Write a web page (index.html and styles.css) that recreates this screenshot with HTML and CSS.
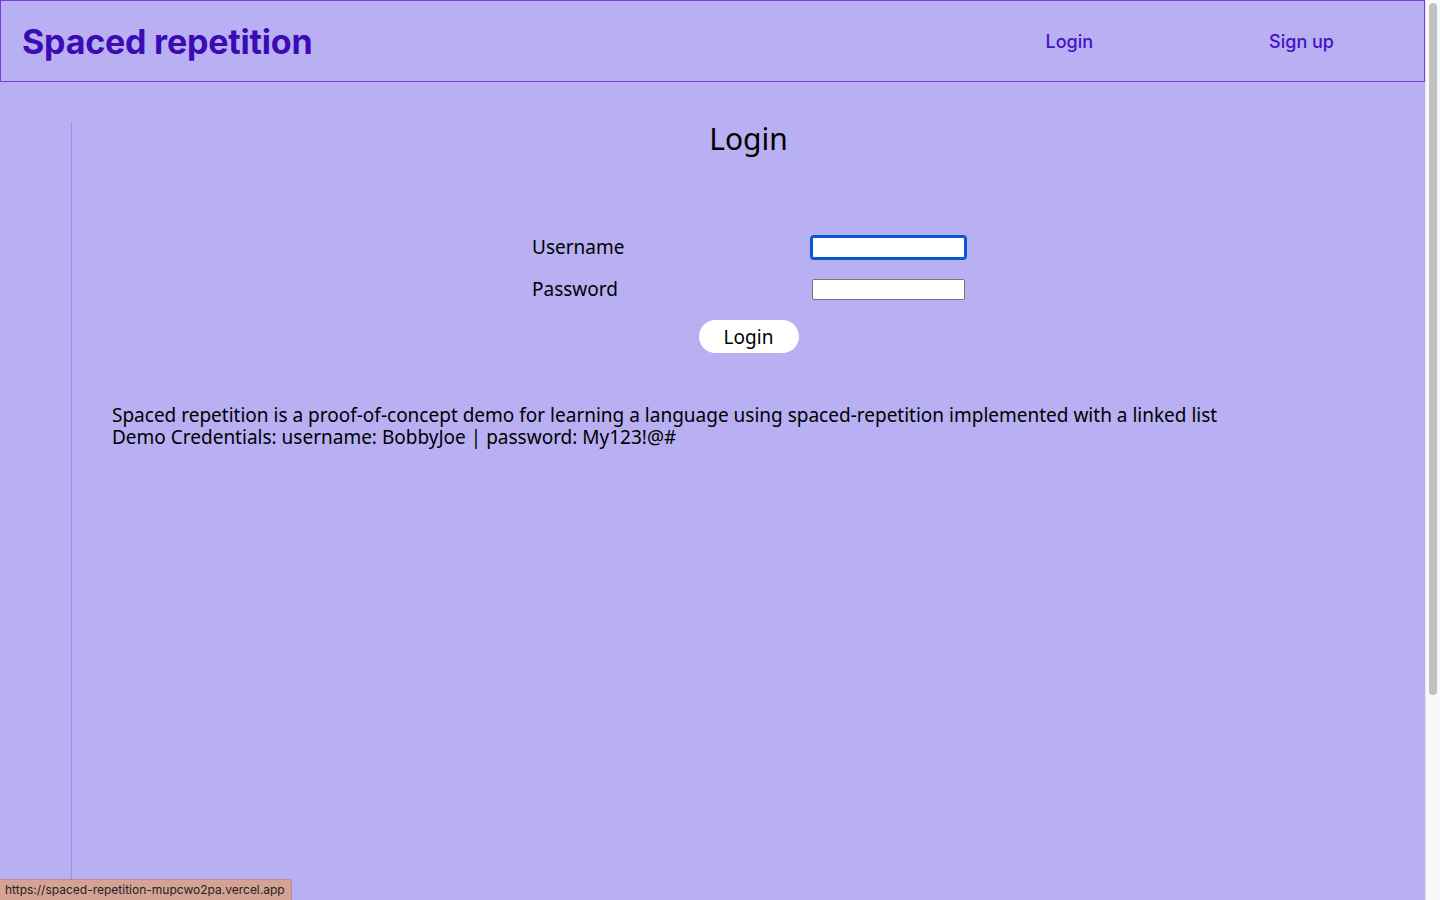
FILE: index.html
```html
<!DOCTYPE html>
<html lang="en">
<head>
<meta charset="utf-8">
<title>Spaced repetition</title>
<link rel="stylesheet" href="styles.css">
</head>
<body>
<header class="site-header">
  <h1 class="brand">Spaced repetition</h1>
  <nav class="nav">
    <a class="nav-link nav-login" href="#">Login</a>
    <a class="nav-link nav-signup" href="#">Sign up</a>
  </nav>
</header>
<main class="main">
  <h2 class="page-title">Login</h2>
  <form class="login-form">
    <label class="label" for="username">Username</label>
    <input class="input input-focus" id="username" type="text">
    <label class="label" for="password">Password</label>
    <input class="input" id="password" type="password">
    <div class="actions"><button class="btn" type="button">Login</button></div>
  </form>
  <div class="about">
    <p>Spaced repetition is a proof-of-concept demo for learning a language using spaced-repetition implemented with a linked list</p>
    <p>Demo Credentials: username: BobbyJoe | password: My123!@#</p>
  </div>
</main>
<div class="scrollbar"><div class="scrollbar-thumb"></div></div>
<div class="status-url">https://spaced-repetition-mupcwo2pa.vercel.app</div>
</body>
</html>
```
FILE: styles.css
```css
html, body { margin: 0; padding: 0; }
html { overflow: hidden; }
body {
  background: #b9aff3;
  font-family: "Noto Sans", "Noto Sans CJK KR", sans-serif;
  color: #000;
  margin-right: 15px;
  height: 900px;
  overflow: hidden;
}
.site-header {
  display: flex;
  align-items: center;
  height: 80px;
  border: 1px solid #7c3aed;
  box-sizing: content-box;
  padding: 0 0 0 21px;
}
.brand {
  margin: 0;
  font-family: Inter, sans-serif;
  font-weight: 700;
  font-size: 34px;
  color: #3d0bb3;
  letter-spacing: -0.2px;
  flex: 1;
}
.nav { display: flex; align-items: center; }
.nav-link {
  font-family: Inter, sans-serif;
  font-size: 18px;
  font-weight: 500;
  color: #4313c4;
  text-decoration: none;
}
.nav-login { margin-right: 176px; }
.nav-signup { margin-right: 90px; }
.main {
  margin: 40px 0 0 71px;
  border-left: 1px solid #a48af0;
  height: 900px;
  padding-top: 1px;
}
.page-title {
  text-align: center;
  font-weight: 400;
  font-size: 30px;
  margin: 0;
  line-height: 32px;
}
.login-form {
  display: grid;
  grid-template-columns: 280px 153px;
  justify-content: center;
  align-items: center;
  row-gap: 21px;
  margin-top: 82px;
}
.label { font-size: 19px; line-height: 21px; }
.input {
  width: 153px;
  height: 21px;
  box-sizing: border-box;
  border: 1px solid #767676;
  border-radius: 2px;
  background: #fff;
  margin: 0;
  padding: 0;
}
.input-focus { outline: 2px solid #0b57d0; outline-offset: 0; border-color: #0b57d0; }
.actions { grid-column: 1 / 3; display: flex; justify-content: center; margin-top: -1px; }
.btn {
  width: 100px;
  height: 33px;
  border: none;
  border-radius: 17px;
  background: #fff;
  font-family: "Noto Sans", sans-serif;
  font-size: 19px;
  color: #000;
  padding: 0;
}
.about {
  margin: 51px 0 0 40px;
  font-size: 19px;
  line-height: 22px;
}
.about p { margin: 0; }
.scrollbar {
  position: fixed;
  top: 0;
  right: 0;
  width: 14px;
  height: 900px;
  background: #f9f9f9;
  border-left: 1px solid #e6e6e6;
}
.scrollbar-thumb {
  margin: 3px 0 0 3px;
  width: 8px;
  height: 692px;
  border-radius: 4px;
  background: #c1c1c1;
}
.status-url {
  position: fixed;
  left: 0;
  bottom: 0;
  background: #d5a296;
  border: 1px solid #c08b80;
  border-left: none;
  border-bottom: none;
  border-top-right-radius: 4px;
  font-family: Inter, sans-serif;
  font-size: 12px;
  color: #222;
  padding: 2px 6px 3px 5px;
}
```
